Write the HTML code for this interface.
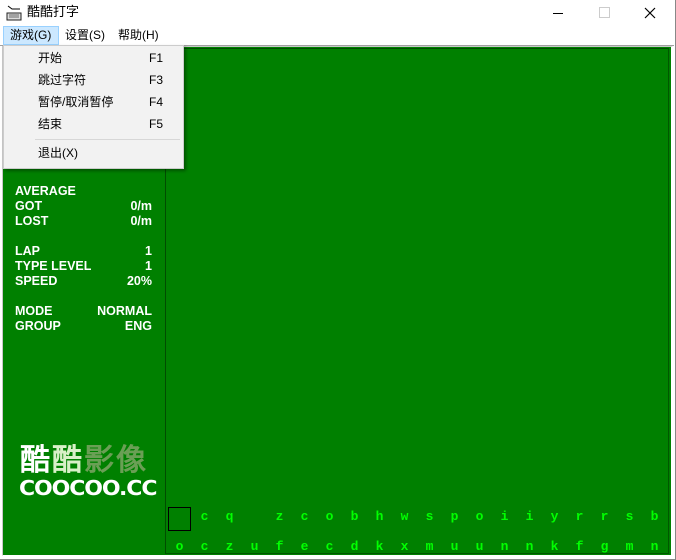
<html><head><style>
body{margin:0;width:676px;height:560px;background:#fff;position:relative;overflow:hidden;font-family:"Liberation Sans","Noto Sans CJK SC",sans-serif;}
.a{position:absolute}
.s{font-weight:bold;color:#fff;font-size:12.5px;font-family:"Liberation Sans",sans-serif;line-height:15px}
.l{color:#00ff00;font-family:"Liberation Mono",monospace;font-weight:bold;font-size:13px;width:25px;text-align:center}
.m{font-size:12px;color:#000;line-height:16px}
</style></head><body>
<div class="a" style="left:0;top:0;width:675px;height:559px;border-right:1px solid #888;border-bottom:1px solid #888"></div>
<svg class="a" style="left:6px;top:5px" width="16" height="16"><path d="M2 1l4 3h8" stroke="#000" fill="none"/><rect x="1" y="8" width="14" height="7" fill="#ddd" stroke="#222"/><path d="M3 10h10M3 12h10" stroke="#666"/></svg>
<div class="a m" style="left:27px;top:4px;font-size:13px">酷酷打字</div>
<div class="a" style="left:553px;top:13px;width:10px;height:1px;background:#000"></div>
<div class="a" style="left:599px;top:7px;width:9px;height:9px;border:1px solid #ccc"></div>
<svg class="a" style="left:644px;top:7px" width="12" height="12"><path d="M1 1L11 11M11 1L1 11" stroke="#000" stroke-width="1.2"/></svg>
<div class="a" style="left:3px;top:26px;width:54px;height:17px;background:#cce8ff;border:1px solid #99d1ff"></div>
<div class="a m" style="left:10px;top:27px">游戏(G)</div>
<div class="a m" style="left:65px;top:27px">设置(S)</div>
<div class="a m" style="left:118px;top:27px">帮助(H)</div>
<div class="a" style="left:0;top:45px;width:674px;height:1px;background:#a0a0a0"></div>
<div class="a" style="left:2px;top:46px;width:668px;height:508px;background:#008000;border:1px solid #c8c8c8;border-right:2px solid #fff;border-bottom-color:#fff"></div>
<div class="a" style="left:165px;top:48px;width:502px;height:504px;border:1px solid #004d00;border-right-color:#005800;border-bottom-color:#005800"></div>
<div class="a s" style="left:15px;top:184px">AVERAGE</div>
<div class="a s" style="left:15px;top:199px">GOT</div><div class="a s" style="left:100px;top:199px;width:52px;text-align:right">0/m</div>
<div class="a s" style="left:15px;top:214px">LOST</div><div class="a s" style="left:100px;top:214px;width:52px;text-align:right">0/m</div>
<div class="a s" style="left:15px;top:244px">LAP</div><div class="a s" style="left:100px;top:244px;width:52px;text-align:right">1</div>
<div class="a s" style="left:15px;top:259px">TYPE LEVEL</div><div class="a s" style="left:100px;top:259px;width:52px;text-align:right">1</div>
<div class="a s" style="left:15px;top:274px">SPEED</div><div class="a s" style="left:100px;top:274px;width:52px;text-align:right">20%</div>
<div class="a s" style="left:15px;top:304px">MODE</div><div class="a s" style="left:80px;top:304px;width:72px;text-align:right">NORMAL</div>
<div class="a s" style="left:15px;top:319px">GROUP</div><div class="a s" style="left:100px;top:319px;width:52px;text-align:right">ENG</div>
<div class="a" style="left:20px;top:444px;font-size:30px;font-weight:bold;letter-spacing:2px;line-height:34px;font-family:'WenQuanYi Zen Hei',sans-serif"><span style="color:#fff">酷</span><span style="color:#d8f0c8">酷</span><span style="color:#6a9f55">影像</span></div>
<div class="a" style="left:19px;top:476px;font-size:20px;font-weight:bold;color:#fff;font-family:'DejaVu Sans',sans-serif;letter-spacing:-1px;transform:scaleX(1.1);transform-origin:left">COOCOO.CC</div>
<div class="a" style="left:168px;top:507px;width:21px;height:22px;border:1px solid #000"></div>
<div id="r1"></div>
<div class="a" style="left:3px;top:45px;width:179px;height:122px;background:#f2f2f2;border:1px solid #ccc;box-shadow:2px 2px 3px rgba(0,0,0,.35)"></div>
<div class="a m" style="left:38px;top:50px">开始</div><div class="a m" style="left:149px;top:50px">F1</div>
<div class="a m" style="left:38px;top:72px">跳过字符</div><div class="a m" style="left:149px;top:72px">F3</div>
<div class="a m" style="left:38px;top:94px">暂停/取消暂停</div><div class="a m" style="left:149px;top:94px">F4</div>
<div class="a m" style="left:38px;top:116px">结束</div><div class="a m" style="left:149px;top:116px">F5</div>
<div class="a" style="left:35px;top:139px;width:145px;height:1px;background:#d7d7d7"></div>
<div class="a m" style="left:38px;top:145px">退出(X)</div>
<script>
var r1="cq zcobhwspoiiyrrsb",r2="oczufecdkxmuunnkfgmn",h="";
for(var i=0;i<r1.length;i++)if(r1[i]!=" ")h+='<div class="a l" style="left:'+(192+i*25)+'px;top:509px">'+r1[i]+'</div>';
for(var i=0;i<r2.length;i++)h+='<div class="a l" style="left:'+(167+i*25)+'px;top:539px;height:14px;overflow:hidden">'+r2[i]+'</div>';
document.getElementById("r1").innerHTML=h;
</script>
</body></html>
